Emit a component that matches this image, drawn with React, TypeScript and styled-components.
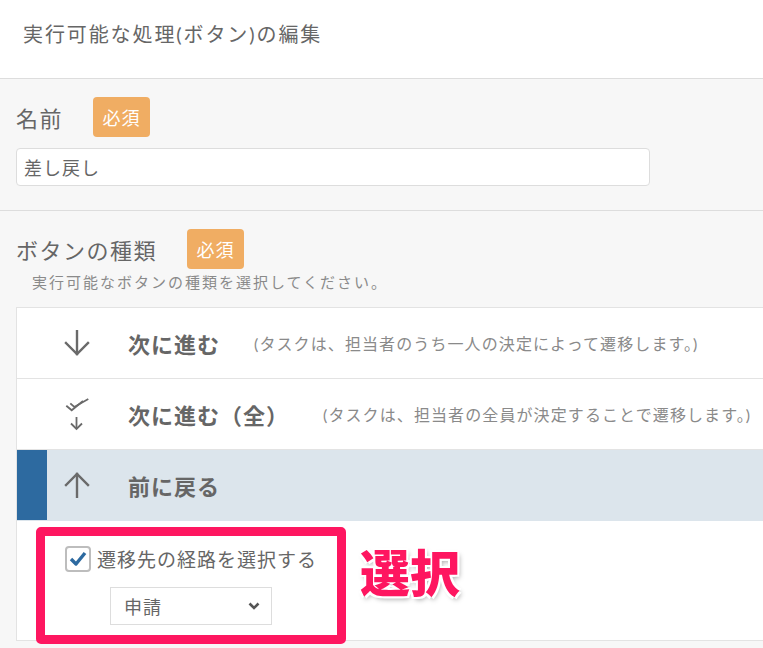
import React, { FC } from 'react';
import styled, { createGlobalStyle } from 'styled-components';

const GlobalStyle = createGlobalStyle`
  html, body {
    margin: 0;
    padding: 0;
    background: #ffffff;
    overflow: hidden;
  }
  body {
    font-family: "Lato", "Noto Sans CJK JP", sans-serif;
    color: #666666;
  }
  * {
    box-sizing: border-box;
  }
`;

const GRAY = '#6a6a6a';

const DownArrow: FC = () => (
    <svg width="26" height="26" viewBox="0 0 26 26" fill="none" stroke={GRAY} strokeWidth="2.4" strokeLinecap="square">
        <line x1="13" y1="1" x2="13" y2="24" />
        <polyline points="2,13 13,24 24,13" />
    </svg>
);

const UpArrow: FC = () => (
    <svg width="26" height="26" viewBox="0 0 26 26" fill="none" stroke={GRAY} strokeWidth="2.4" strokeLinecap="square">
        <line x1="13" y1="2" x2="13" y2="25" />
        <polyline points="2,13 13,2 24,13" />
    </svg>
);

// two stacked check marks over a small down arrow
const DoubleCheckArrow: FC = () => (
    <svg width="28" height="33" viewBox="0 0 28 33" fill="none" stroke={GRAY} strokeWidth="1.8">
        <polyline points="3.3,7.7 8.7,12.3 20,3" />
        <polyline points="7.3,5.3 11.3,9 25.3,1" />
        <line x1="13.5" y1="19" x2="13.5" y2="31" />
        <polyline points="8,25.5 13.5,31 19,25.5" />
    </svg>
);

interface OptionItem {
    key: string;
    title: string;
    desc?: string;
    icon: React.ReactNode;
    selected?: boolean;
}

const options: OptionItem[] = [
    { key: 'next', title: '次に進む', desc: '(タスクは、担当者のうち一人の決定によって遷移します。)', icon: <DownArrow /> },
    { key: 'nextAll', title: '次に進む（全）', desc: '(タスクは、担当者の全員が決定することで遷移します。)', icon: <DoubleCheckArrow /> },
    { key: 'back', title: '前に戻る', icon: <UpArrow />, selected: true },
];

export default function App() {
    return (
        <Page>
            <GlobalStyle />
            <Header>
                <HeaderTitle>実行可能な処理(ボタン)の編集</HeaderTitle>
            </Header>

            <Section>
                <LabelRow>
                    <Label>名前</Label>
                    <Badge>必須</Badge>
                </LabelRow>
                <TextInput value="差し戻し" readOnly />
            </Section>

            <Section $last>
                <LabelRow>
                    <Label>ボタンの種類</Label>
                    <Badge>必須</Badge>
                </LabelRow>
                <Hint>実行可能なボタンの種類を選択してください。</Hint>

                <OptionList>
                    {options.map((o) => (
                        <OptionRow key={o.key} $selected={!!o.selected}>
                            <Marker $selected={!!o.selected} />
                            <IconCell>{o.icon}</IconCell>
                            <OptionTitle>{o.title}</OptionTitle>
                            {o.desc ? <OptionDesc>{o.desc}</OptionDesc> : null}
                        </OptionRow>
                    ))}
                    <DetailPanel>
                        <Highlight>
                            <CheckRow>
                                <CheckBox>
                                    <svg width="18" height="16" viewBox="0 0 18 16">
                                        <polyline points="2,8 7,13 16,2" fill="none" stroke="#2d6aa0" strokeWidth="3.4" strokeLinejoin="round" />
                                    </svg>
                                </CheckBox>
                                <CheckLabel>遷移先の経路を選択する</CheckLabel>
                            </CheckRow>
                            <SelectBox>
                                <span>申請</span>
                                <svg width="12" height="8" viewBox="0 0 12 8">
                                    <polyline points="1.5,1.5 6,6 10.5,1.5" fill="none" stroke="#555" strokeWidth="2.6" />
                                </svg>
                            </SelectBox>
                        </Highlight>
                        <Callout>選択</Callout>
                    </DetailPanel>
                </OptionList>
            </Section>
        </Page>
    );
}

const Page = styled.div`
  width: 763px;
  height: 648px;
  display: flex;
  flex-direction: column;
  overflow: hidden;
`;

const Header = styled.div`
  height: 79px;
  padding: 20px 0 0 23px;
  border-bottom: 1px solid #dddddd;
  background: #ffffff;
`;

const HeaderTitle = styled.div`
  font-size: 20px;
  line-height: 28px;
  letter-spacing: 1.9px;
  color: #666666;
`;

const Section = styled.div<{ $last?: boolean }>`
  background: #f7f7f7;
  padding: ${({ $last }) => ($last ? '18px 0 0 16px' : '18px 0 24px 16px')};
  border-bottom: ${({ $last }) => ($last ? 'none' : '1px solid #dddddd')};
  flex: ${({ $last }) => ($last ? '1' : 'none')};
`;

const LabelRow = styled.div`
  display: flex;
  align-items: center;
  height: 40px;
`;

const Label = styled.div`
  font-size: 22px;
  letter-spacing: 1.5px;
  color: #666666;
`;

const Badge = styled.span`
  margin-left: 30px;
  width: 57px;
  height: 40px;
  border-radius: 4px;
  background: #f0ad63;
  color: #ffffff;
  font-size: 18px;
  letter-spacing: 1px;
  display: flex;
  align-items: center;
  justify-content: center;
`;

const TextInput = styled.input`
  display: block;
  margin-top: 11px;
  width: 634px;
  height: 38px;
  padding: 0 7px;
  border: 1px solid #dddddd;
  border-radius: 4px;
  background: #ffffff;
  font-family: inherit;
  font-size: 18px;
  letter-spacing: 1px;
  color: #666666;
  outline: none;
`;

const Hint = styled.div`
  margin-top: 3px;
  padding-left: 16px;
  font-size: 15px;
  line-height: 20px;
  letter-spacing: 2px;
  color: #8a8a8a;
`;

const OptionList = styled.div`
  margin-top: 15px;
  margin-right: -40px;
  background: #ffffff;
  border-top: 1px solid #e3e3e3;
  border-left: 1px solid #e3e3e3;
`;

const OptionRow = styled.div<{ $selected: boolean }>`
  display: flex;
  align-items: center;
  height: 71px;
  white-space: nowrap;
  background: ${({ $selected }) => ($selected ? '#dce5ec' : '#ffffff')};
  border-bottom: 1px solid ${({ $selected }) => ($selected ? '#dce5ec' : '#e3e3e3')};
`;

const Marker = styled.div<{ $selected: boolean }>`
  width: 30px;
  align-self: stretch;
  background: ${({ $selected }) => ($selected ? '#2d6aa0' : 'transparent')};
`;

const IconCell = styled.div`
  width: 60px;
  display: flex;
  align-items: center;
  justify-content: center;
`;

const OptionTitle = styled.div`
  margin-left: 21px;
  font-size: 22px;
  font-weight: 700;
  letter-spacing: 1px;
  color: #666666;
`;

const OptionDesc = styled.div`
  margin-left: 34px;
  font-size: 16px;
  letter-spacing: 1.1px;
  color: #8a8a8a;
`;

const DetailPanel = styled.div`
  height: 120px;
  display: flex;
  align-items: flex-start;
  padding: 6px 0 0 19px;
  border-bottom: 1px solid #e3e3e3;
  background: #ffffff;
`;

const Highlight = styled.div`
  position: relative;
  z-index: 1;
  width: 310px;
  height: 117px;
  border: 9px solid #fe1660;
  border-radius: 5px;
  background: #ffffff;
  display: flex;
  flex-direction: column;
  align-items: center;
  padding-top: 9px;
  gap: 15px;
`;

const CheckRow = styled.div`
  display: flex;
  align-items: center;
  gap: 6px;
  height: 27px;
`;

const CheckBox = styled.span`
  width: 26px;
  height: 26px;
  border: 2px solid #bdbdbd;
  border-radius: 4px;
  background: #ffffff;
  display: flex;
  align-items: center;
  justify-content: center;
`;

const CheckLabel = styled.span`
  font-size: 19px;
  letter-spacing: 1px;
  color: #666666;
`;

const SelectBox = styled.div`
  width: 162px;
  height: 38px;
  border: 1px solid #dddddd;
  background: #ffffff;
  display: flex;
  align-items: center;
  justify-content: space-between;
  padding: 0 11px 0 13px;
  font-size: 18px;
  letter-spacing: 1px;
  color: #666666;
`;

const Callout = styled.div`
  margin: 14px 0 0 14px;
  font-size: 50px;
  line-height: 64px;
  font-weight: 900;
  letter-spacing: 0;
  color: #fe1660;
  text-shadow:
    -2px -2px 0 #ffffff, 2px -2px 0 #ffffff, -2px 2px 0 #ffffff, 2px 2px 0 #ffffff,
    2px 3px 5px rgba(0, 0, 0, 0.35);
`;
